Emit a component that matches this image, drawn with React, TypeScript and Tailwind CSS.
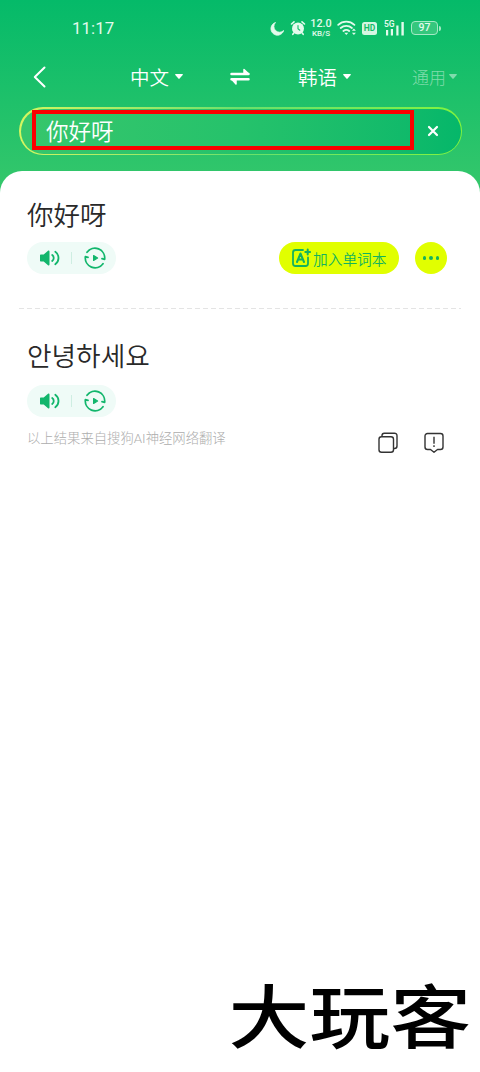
import React from "react";

function StatusBar() {
  return (
    <div className="flex h-14 items-center justify-between pl-[72px] pr-[39px] text-[#e3faec]">
      <span className="text-[16.8px] font-normal leading-none tracking-[0.1px]">11:17</span>
      <div className="flex items-center">
        <svg className="mr-[6px] h-[15px] w-[14px]" viewBox="0 0 14 15" fill="currentColor">
          <path d="M5.500 1.500A6.500 6.500 0 1 0 13.700 9.500 5.600 5.600 0 0 1 5.500 1.500Z" stroke="currentColor" strokeWidth=".8" strokeLinejoin="round" />
        </svg>
        <svg className="mr-[4px] h-4 w-4" viewBox="0 0 16 16" fill="currentColor">
          <circle cx="8" cy="8.500" r="6" />
          <path d="M1.500 4 4 1.800M14.500 4 12 1.800M3.800 13l-1 1.300M12.200 13l1 1.300" stroke="currentColor" strokeWidth="1.600" strokeLinecap="round" />
          <path d="M8 5.500v3.300l1.800 1.400" stroke="#0fbd69" strokeWidth="1.100" fill="none" strokeLinecap="round" />
        </svg>
        <div className="mr-[5px] flex w-[22px] flex-col items-center font-medium">
          <span className="text-[10.800px] leading-[11px]">12.0</span>
          <span className="text-[8px] leading-[9px]">KB/S</span>
        </div>
        <svg className="mr-[5px] h-4 w-[20px]" viewBox="0 0 20 16" fill="none" stroke="currentColor" strokeWidth="1.800" strokeLinecap="round">
          <path d="M1.200 4.800a12 12 0 0 1 16.200 0M3.700 8a8.400 8.400 0 0 1 11.200 0M6.400 11a4.600 4.600 0 0 1 5.800 0" />
          <path d="m9.300 15-2-2.200h4ZM16.900 8.500l2 2.300h-4ZM16.900 15l-2-2.300h4Z" fill="currentColor" stroke="none" />
        </svg>
        <span className="mr-[7px] flex h-[13px] w-[15px] items-center justify-center rounded-[2.500px] bg-[#d5f6e2] text-[8.500px] font-bold leading-none text-[#12bd68]">HD</span>
        <svg className="mr-[6px] h-[17px] w-[21px]" viewBox="0 0 21 17" fill="currentColor">
          <text x="0" y="7" fontSize="8.500" fontWeight="600" fontFamily="Roboto">5G</text>
          <path d="M2 10h2.200v5.500H2zM6.800 9H9v6.500H6.800zM12.300 5.500h2.200v10h-2.200zM17.400 2h2.400v13.500h-2.400z" />
        </svg>
        <span className="flex h-[14px] w-[27px] items-center justify-center rounded-[4px] border border-[#a5e9c5] bg-[#35c77d] text-[10.500px] font-medium leading-none">97</span>
        <span className="ml-px h-[5px] w-[2px] rounded-r bg-[#a5e9c5]" />
      </div>
    </div>
  );
}

function Caret() {
  return (
    <svg className="h-[5px] w-[8px]" viewBox="0 0 8 5" fill="currentColor">
      <path d="M.7 0h6.600c.6 0 .8.600.4 1L4.600 4.600a.8.800 0 0 1-1.200 0L.3 1C-.1.600.1 0 .7 0Z" />
    </svg>
  );
}

function LanguageBar() {
  return (
    <div className="flex h-[41px] items-center pl-[33px] pr-[23px] text-white">
      <svg className="h-[22px] w-[14px]" viewBox="0 0 14 22" fill="none" stroke="currentColor" strokeWidth="2" strokeLinecap="round" strokeLinejoin="round">
        <path d="M11.500 1.500 1.800 11l9.700 9.500" />
      </svg>
      <div className="ml-[83px] flex w-[100px] items-center gap-[6px] text-[19.500px] font-[350]">
        <span className="pt-[4px]">中文</span>
        <Caret />
      </div>
      <svg className="h-[18px] w-[20px]" viewBox="0 0 20 18" fill="none" stroke="currentColor" strokeWidth="2.500" strokeLinecap="round" strokeLinejoin="round">
        <path d="M1.500 6h17M1.500 11.200h17" />
        <path d="M14 1.500v3.700h4ZM6 16v-4.500H2Z" fill="currentColor" strokeWidth="1.500" />
      </svg>
      <div className="ml-[48px] flex items-center gap-[6px] text-[19.500px] font-[350]">
        <span className="pt-[4px]">韩语</span>
        <Caret />
      </div>
      <div className="ml-auto flex items-center gap-[3px] text-[17px] font-light text-white/45">
        <span className="pt-[4px]">通用</span>
        <Caret />
      </div>
    </div>
  );
}

function SearchField() {
  return (
    <div className="ml-[19px] mr-[18px] mt-[10px] h-12 rounded-full bg-linear-to-r from-[#d6f65f] via-[#69e16b] to-[#82f43c] p-[1.500px]">
      <div className="flex h-full items-center rounded-full bg-linear-to-r from-[#36c66c] via-[#25c26b] to-[#05b76a] pl-[11.500px]">
        <div className="mb-[2px] flex h-10 w-[382px] items-center border-4 border-[#fb0000] pl-[10px] text-[22.500px] font-[350] text-white">
          <span className="pt-[5px]">你好呀</span>
        </div>
        <svg className="ml-[13px] h-3 w-3" viewBox="0 0 12 12" stroke="white" strokeWidth="2.200" strokeLinecap="round">
          <path d="m2 2 8 8M10 2l-8 8" />
        </svg>
      </div>
    </div>
  );
}

function AudioPill() {
  return (
    <div className="flex h-8 w-[89px] items-center rounded-full bg-[#effbf7] pl-[13px] text-[#12b66c]">
      <svg className="h-[16px] w-[21px]" viewBox="0 0 21 16" fill="none" stroke="currentColor" strokeWidth="1.800" strokeLinecap="round">
        <path d="M1 4.600h2.700l4.300-3.800c.7-.6 1.500-.2 1.500.7v13c0 .9-.8 1.300-1.500.7l-4.300-3.800H1c-.6 0-1-.4-1-1V5.600c0-.6.4-1 1-1Z" fill="currentColor" stroke="none" />
        <path d="M12.200 5a3.700 3.700 0 0 1 0 6M15.300 1.800a7.600 7.600 0 0 1 0 12.400" />
      </svg>
      <span className="ml-[10px] h-3 w-px bg-[#ceeee2]" />
      <svg className="ml-[12px] h-[22px] w-[22px]" viewBox="0 0 22 22" fill="none" stroke="currentColor" strokeWidth="1.800" strokeLinecap="round" strokeLinejoin="round">
        <path d="M3 5.200A9.800 9.800 0 0 1 20.600 12.300l-2.600-.6" />
        <path d="M19 16.800A9.800 9.800 0 0 1 1.400 9.700l2.600.6" />
        <path d="M9.600 8.600v4.800l4-2.400Z" fill="currentColor" strokeWidth="1.200" />
      </svg>
    </div>
  );
}

function SourceBlock() {
  return (
    <section className="h-[137px] px-[27px] pt-[25px]">
      <h1 className="h-10 text-[26.500px] font-[350] leading-10">你好呀</h1>
      <div className="mt-[6px] flex items-center">
        <AudioPill />
        <button className="ml-auto mr-4 flex h-8 w-[120px] items-center rounded-full bg-[#e1ff00] pl-[12px] text-[14.700px] font-[350] text-[#12b35e]">
          <svg className="mr-[2px] h-5 w-5 shrink-0" viewBox="0 0 20 20" fill="none" stroke="currentColor" strokeWidth="2" strokeLinecap="round" strokeLinejoin="round">
            <path d="M12 2H4.500A2.500 2.500 0 0 0 2 4.500v11A2.500 2.500 0 0 0 4.500 18h10a2.500 2.500 0 0 0 2.500-2.500V9.500" strokeWidth="1.800" />
            <path d="m6 14 3.500-8.500L13 14M7.200 11.500h4.600M14.300 4h4.800M16.700 1.600v4.800" />
          </svg>
          <span className="whitespace-nowrap pt-[4px]">加入单词本</span>
        </button>
        <button className="mr-[6px] flex h-8 w-8 items-center justify-center gap-[3px] rounded-full bg-[#e1ff00]">
          <i className="h-[3.500px] w-[3.500px] rounded-full bg-[#12b35e]" />
          <i className="h-[3.500px] w-[3.500px] rounded-full bg-[#12b35e]" />
          <i className="h-[3.500px] w-[3.500px] rounded-full bg-[#12b35e]" />
        </button>
      </div>
    </section>
  );
}

function ResultBlock() {
  return (
    <section className="px-[27px] pt-[28px]">
      <h2 className="h-10 text-[26.700px] font-[350] leading-10">안녕하세요</h2>
      <div className="mt-[8px]">
        <AudioPill />
      </div>
      <div className="flex h-[52px] pr-[8px]">
        <p className="pt-[12px] text-[13.350px] font-light leading-5 text-[#adadad]">以上结果来自搜狗AI神经网络翻译</p>
        <svg className="ml-auto mt-[15px] h-[22px] w-[22px]" viewBox="0 0 22 22" fill="none" stroke="#333" strokeWidth="1.400">
          <rect x="2" y="4.700" width="14.500" height="15.500" rx="2.500" />
          <path d="M5 4V3.500A2.300 2.300 0 0 1 7.300 1.200h10A2.500 2.500 0 0 1 20 3.700V14a2.500 2.500 0 0 1-2.500 2.500H17" />
        </svg>
        <svg className="ml-[24px] mt-[15px] h-[22px] w-[22px]" viewBox="0 0 22 22" fill="none" stroke="#333" strokeWidth="1.400" strokeLinejoin="round">
          <path d="M4.500 1.500h13A2.500 2.500 0 0 1 20 4v11a2.500 2.500 0 0 1-2.500 2.500h-3L11 20.300l-3.500-2.800h-3A2.500 2.500 0 0 1 2 15V4a2.500 2.500 0 0 1 2.500-2.500Z" />
          <path d="M11 4.800v6.900M11 13.300v1.700" />
        </svg>
      </div>
    </section>
  );
}

export default function App() {
  return (
    <div className="flex h-[1072px] w-[480px] flex-col overflow-hidden bg-white bg-linear-[180deg,#05ba69_0px,#35c76b_190px] font-[Roboto,'Noto_Sans_CJK_SC','Noto_Sans_CJK_KR',sans-serif] text-[#292929]">
      <header className="h-[171px] shrink-0">
        <StatusBar />
        <LanguageBar />
        <SearchField />
      </header>
      <main className="flex flex-1 flex-col rounded-t-[22px] bg-white">
        <SourceBlock />
        <svg className="ml-[19px] h-px w-[442px]" viewBox="0 0 442 1">
          <path d="M0 .5h442" stroke="#e4e4e4" strokeDasharray="5 3" />
        </svg>
        <ResultBlock />
        <footer className="mt-auto flex h-[104px] justify-end pr-[9px]">
          <span className="origin-right scale-x-[1.010] scale-y-[0.870] whitespace-nowrap text-[80px] font-medium leading-[104px] text-black">大玩客</span>
        </footer>
      </main>
    </div>
  );
}
